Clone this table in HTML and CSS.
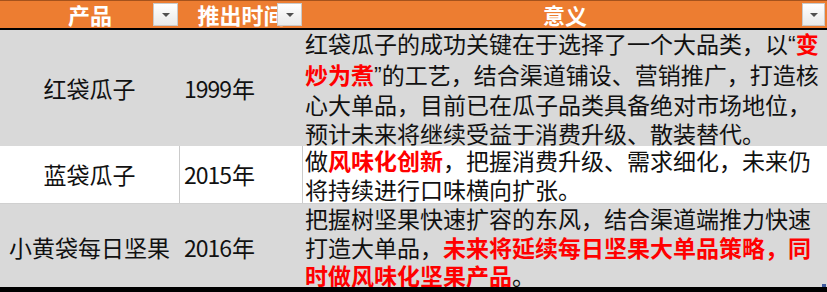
FILE: index.html
```html
<!DOCTYPE html>
<html lang="zh-CN">
<head>
<meta charset="utf-8">
<title>产品意义</title>
<link rel="stylesheet" href="styles.css">
</head>
<body>
<div class="sheet">
  <div class="row head">
    <div class="cell c1">产品<span class="filter"><span class="tri"></span></span></div>
    <div class="cell c2">推出时间<span class="filter"><span class="tri"></span></span></div>
    <div class="cell c3">意义<span class="filter"><span class="tri"></span></span></div>
  </div>
  <div class="row r1">
    <div class="cell c1">红袋瓜子</div>
    <div class="cell c2"><span class="num">1999</span>年</div>
    <div class="cell c3"><p>红袋瓜子的成功关键在于选择了一个大品类，以<span class="q">“</span><b>变<br>炒为煮</b><span class="q">”</span>的工艺，结合渠道铺设、营销推广，打造核<br>心大单品，目前已在瓜子品类具备绝对市场地位，<br>预计未来将继续受益于消费升级、散装替代。</p></div>
  </div>
  <div class="row r2">
    <div class="cell c1">蓝袋瓜子</div>
    <div class="cell c2"><span class="num">2015</span>年</div>
    <div class="cell c3"><p>做<b>风味化创新</b>，把握消费升级、需求细化，未来仍<br>将持续进行口味横向扩张。</p></div>
  </div>
  <div class="row r3">
    <div class="cell c1">小黄袋每日坚果</div>
    <div class="cell c2"><span class="num">2016</span>年</div>
    <div class="cell c3"><p>把握树坚果快速扩容的东风，结合渠道端推力快速<br>打造大单品，<b>未来将延续每日坚果大单品策略，同<br>时做风味化坚果产品</b>。</p></div>
  </div>
  <span class="handle"></span>
</div>
</body>
</html>
```
FILE: styles.css
```css
html, body {
  margin: 0;
  padding: 0;
  background: #ffffff;
}

.sheet {
  position: relative;
  width: 827px;
  height: 292px;
  box-sizing: border-box;
  border-bottom: 5px solid #000000;
  overflow: hidden;
  font-family: "Noto Sans CJK SC", "Noto Sans", sans-serif;
  font-size: 23px;
  line-height: 28.5px;
  color: #111111;
}

.row {
  display: grid;
  grid-template-columns: 180px 123px 524px;
}

.cell {
  box-sizing: border-box;
  display: flex;
  align-items: center;
  overflow: hidden;
  white-space: nowrap;
}

.cell p {
  margin: 0;
}

.head {
  height: 27px;
  background: #ED7D31;
  border-top: 1px solid #a5521c;
  border-bottom: 2px solid #000000;
}

.head .cell {
  position: relative;
  justify-content: center;
  color: #ffffff;
  font-weight: bold;
  font-size: 22px;
  line-height: 27px;
}

.filter {
  position: absolute;
  top: 2px;
  right: 2px;
  width: 25px;
  height: 23px;
  box-sizing: border-box;
  border: 1px solid #c9c9c9;
  background: linear-gradient(#ffffff, #e9e9e9);
  display: flex;
  align-items: center;
  justify-content: center;
}

.head .c2 .filter {
  right: 1px;
}

.head .c3 .filter {
  width: 23px;
}

.tri {
  width: 0;
  height: 0;
  border-left: 4px solid transparent;
  border-right: 4px solid transparent;
  border-top: 4px solid #505050;
}

.r1 {
  height: 116px;
  background: #D9D9D9;
}

.r2 {
  height: 58px;
  background: #ffffff;
}

.r3 {
  height: 86px;
  background: #D9D9D9;
}

.r1 .c1, .r1 .c2, .r3 .c1, .r3 .c2 {
  border-right: 1px solid #D9D9D9;
}

.r2 .c1, .r2 .c2 {
  border-right: 1px solid #cbcbcb;
}

.r2 {
  border-bottom: 1px solid #d0d0d0;
  box-sizing: border-box;
}

.c1 {
  justify-content: center;
}

.r1 .c2, .r2 .c2, .r3 .c2 {
  padding-left: 4px;
}

.r1 .c3, .r2 .c3, .r3 .c3 {
  padding-left: 2px;
}

.num {
  letter-spacing: -1px;
  margin-right: 1px;
}

.q {
  font-family: "Liberation Sans", sans-serif;
}

b {
  color: #ff0000;
  font-weight: bold;
}

.handle {
  position: absolute;
  right: 1px;
  bottom: 0;
  width: 4px;
  height: 3px;
  background: #3d5a9e;
}
```
